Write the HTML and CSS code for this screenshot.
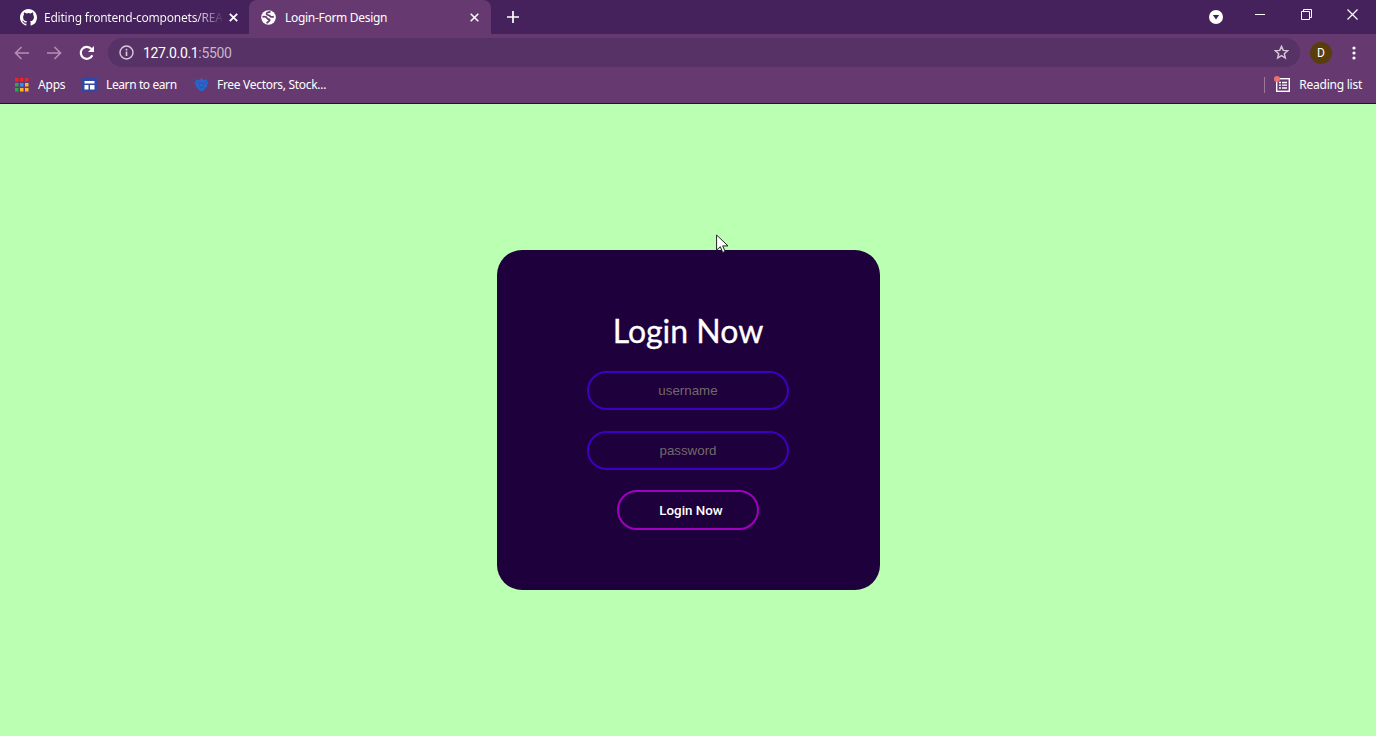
FILE: index.html
```html
<!DOCTYPE html>
<html lang="en">
<head>
<meta charset="utf-8">
<title>Login-Form Design</title>
<link rel="stylesheet" href="styles.css">
</head>
<body>
<header class="browser">
  <div class="tabs">
    <div class="tab tab-first">
      <svg class="github" width="17" height="17" viewBox="0 0 16 16"><path fill="#fff" d="M8 0C3.58 0 0 3.58 0 8c0 3.54 2.29 6.53 5.47 7.59.4.07.55-.17.55-.38 0-.19-.01-.82-.01-1.49-2.01.37-2.53-.49-2.69-.94-.09-.23-.48-.94-.82-1.13-.28-.15-.68-.52-.01-.53.63-.01 1.08.58 1.23.82.72 1.21 1.87.87 2.33.66.07-.52.28-.87.51-1.07-1.78-.2-3.64-.89-3.64-3.95 0-.87.31-1.59.82-2.15-.08-.2-.36-1.02.08-2.12 0 0 .67-.21 2.2.82a7.6 7.6 0 0 1 4 0c1.53-1.04 2.2-.82 2.2-.82.44 1.1.16 1.92.08 2.12.51.56.82 1.27.82 2.15 0 3.07-1.87 3.75-3.65 3.95.29.25.54.73.54 1.48 0 1.07-.01 1.93-.01 2.2 0 .21.15.46.55.38A8 8 0 0 0 16 8c0-4.42-3.58-8-8-8z"/></svg>
      <span class="tab-title faded">Editing frontend-componets/REA</span>
      <svg class="close" width="9" height="9" viewBox="0 0 9 9"><path d="M.8.8l7.4 7.4M8.2.8L.8 8.2" stroke="#fff" stroke-width="1.8"/></svg>
    </div>
    <div class="tab tab-active">
      <svg width="15" height="15" viewBox="0 0 15 15"><circle cx="7.5" cy="7.5" r="7.3" fill="#fff"/><path d="M9.500 1.800C7 1.800 4.800 3.200 5.800 4.600 6.500 5.500 8.400 4.800 9 6c.5 1 1.600 1.300 3.800.6M1.500 6.800c2.600-.4 4.200.200 4.600 1.400.3 1 1.700.7 2.400 1.300.7.8-.3 1.500-1.200 2.200-.6.5-.9.900-1.800 1.200" fill="none" stroke="#663a70" stroke-width="1.700"/></svg>
      <span class="tab-title">Login-Form Design</span>
      <svg class="close" width="9" height="9" viewBox="0 0 9 9"><path d="M.7.7l7.6 7.6M8.3.7L.7 8.3" stroke="#fff" stroke-width="1.5"/></svg>
    </div>
    <div class="tab-rest">
      <svg class="new-tab" width="12" height="12" viewBox="0 0 12 12"><path d="M6 0v12M0 6h12" stroke="#fff" stroke-width="1.700"/></svg>
      <div class="window-tools">
        <svg class="tab-search" width="14" height="14" viewBox="0 0 14 14"><circle cx="7" cy="7" r="7" fill="#fff"/><path d="M3.8 5h6.4L7 9.5z" fill="#40205a"/></svg>
        <svg class="minimize" width="10" height="10" viewBox="0 0 10 10"><path d="M0 5.5h10" stroke="#fff"/></svg>
        <svg class="restore" width="11" height="11" viewBox="0 0 11 11"><path d="M.5 2.5h8v8h-8zM2.5 2.5v-2h8v8h-2" fill="none" stroke="#fff"/></svg>
        <svg class="exit" width="11" height="11" viewBox="0 0 11 11"><path d="M.5.5l10 10M10.5.5l-10 10" stroke="#fff" stroke-width="1.2"/></svg>
      </div>
    </div>
  </div>
  <div class="toolbar">
    <svg class="back" width="15" height="14" viewBox="0 0 15 14"><path d="M15 7H1.5M7.5 1l-6 6 6 6" fill="none" stroke="#b68db6" stroke-width="1.6"/></svg>
    <svg class="forward" width="15" height="14" viewBox="0 0 15 14"><path d="M0 7h13.5M7.5 1l6 6-6 6" fill="none" stroke="#b68db6" stroke-width="1.6"/></svg>
    <svg class="reload" width="16" height="16" viewBox="0 0 16 16"><path d="M13.3 10.2A6 6 0 1 1 12.4 4" fill="none" stroke="#fff" stroke-width="2.2"/><path d="M15 1v6H9z" fill="#fff"/></svg>
    <div class="address">
      <svg width="15" height="15" viewBox="0 0 15 15"><circle cx="7.5" cy="7.5" r="6.5" fill="none" stroke="#dbcbdc" stroke-width="1.4"/><path d="M7.5 6.5V11M7.5 3.8v1.6" stroke="#dbcbdc" stroke-width="1.6"/></svg>
      <span class="url">127.0.0.1<span class="port">:5500</span></span>
      <svg class="star" width="15" height="15" viewBox="0 0 15 15"><path d="M7.5 1.4l1.75 4 4.35.35-3.3 2.9 1 4.3-3.8-2.3-3.8 2.3 1-4.3-3.3-2.9 4.35-.35z" fill="none" stroke="#d5c3d5" stroke-width="1.5"/></svg>
    </div>
    <div class="avatar">D</div>
    <svg class="more" width="4" height="14" viewBox="0 0 4 14"><g fill="#fff"><circle cx="2" cy="2" r="1.6"/><circle cx="2" cy="7" r="1.6"/><circle cx="2" cy="12" r="1.6"/></g></svg>
  </div>
  <nav class="bookmarks">
    <svg class="apps" width="14" height="14" viewBox="0 0 14 14"><path fill="#e22" d="M0 0h3.5v3.5H0zM5 0h3.5v3.5H5zM10 0h3.5v3.5H10z"/><path fill="#2ba84a" d="M0 5h3.5v3.5H0z"/><path fill="#348cff" d="M5 5h3.5v3.5H5z"/><path fill="#ffb624" d="M10 5h3.5v3.5H10zM5 10h3.5v3.5H5zM10 10h3.5v3.5H10z"/><path fill="#2ba84a" d="M0 10h3.5v3.5H0z"/></svg>
    <span class="apps-label">Apps</span>
    <svg class="learn" width="15" height="15" viewBox="0 0 15 15"><rect width="15" height="15" rx="1" fill="#3048a2"/><path d="M2.500 4h10v2.500h-10zM2.500 8h4v4.500h-4zM8 8h4.500v4.500H8z" fill="#fff"/></svg>
    <span class="learn-label">Learn to earn</span>
    <svg class="vectors" width="15" height="15" viewBox="0 0 15 15"><path fill="#2468cb" d="M7.500 0l1.200 2.400c1 .1 1.800.4 2.500.8l2.100-1-.4 2.600L15 6l-2.100 1.500.3 2.200-1.500.6c-.9 2.200-2.400 3.700-4.200 3.700s-3.300-1.500-4.200-3.700l-1.500-.6.300-2.200L0 6l2.100-1.200-.4-2.600 2.100 1c.7-.4 1.500-.7 2.500-.8z"/><path d="M3 6h9M5 9.700q2.500 2.500 5 0M4.500 7.800H6M9 7.800h1.500" fill="none" stroke="#563fa0"/></svg>
    <span class="vectors-label">Free Vectors, Stock...</span>
    <span class="divider"></span>
    <svg class="reading" width="17" height="17" viewBox="0 0 17 17"><rect x="2.700" y="2.700" width="12.600" height="12.600" fill="none" stroke="#fff" stroke-width="1.400"/><path d="M5 6.500h2M5 9.200h2M5 12h2M8 6.500h5M8 9.200h5M8 12h5" stroke="#fff" stroke-width="1.300"/><circle cx="3" cy="3" r="3" fill="#ef716d"/></svg>
    <span class="reading-label">Reading list</span>
  </nav>
</header>
<main class="page">
  <form class="card">
    <h1 class="heading">Login Now</h1>
    <input class="field" type="text" placeholder="username">
    <input class="field" type="password" placeholder="password">
    <button class="submit" type="button">Login Now</button>
  </form>
</main>
<svg class="cursor" width="13" height="20" viewBox="0 0 13 20"><path d="M.6 1v15.200l3.700-3.500 2.400 5.700 2.400-1-2.400-5.500H12z" fill="#fff" stroke="#222" stroke-width="1"/></svg>
</body>
</html>
```
FILE: styles.css
```css
* { box-sizing: border-box; }
body { margin: 0; height: 736px; overflow: hidden; display: flex; flex-direction: column; background: #bbffb2; font-family: "Noto Sans", sans-serif; }
svg { display: block; flex: none; }
.browser { height: 104px; flex: none; background: #663a70; border-bottom: 1px solid #28103a; color: #fff; font-size: 12px; }
.tabs { height: 34px; display: flex; background: #46225c; }
.tab { height: 34px; display: flex; align-items: center; }
.tab-first { width: 249px; padding-left: 20px; }
.tab-title { margin-left: 7px; white-space: nowrap; letter-spacing: -.22px; }
.faded { width: 178px; background: linear-gradient(to right, #fff 152px, #5a3a6c 177px); background-clip: text; color: transparent; }
.tab-first .close { margin-left: 7px; }
.tab-active { width: 242px; padding: 0 12px; background: #663a70; border-radius: 8px 8px 0 0; }
.tab-active .tab-title { margin-left: 9px; letter-spacing: -.3px; }
.tab-active .close { margin-left: auto; }
.tab-rest { flex: 1; display: flex; }
.new-tab { margin: 11px 0 0 16px; }
.window-tools { display: flex; margin-left: auto; padding-right: 18px; }
.tab-search { margin-top: 10px; }
.minimize { margin: 9px 0 0 32px; }
.restore { margin: 9px 0 0 36px; }
.exit { margin: 9px 0 0 35px; }
.toolbar { height: 37px; display: flex; align-items: center; padding-left: 14px; }
.forward { margin-left: 18px; }
.reload { margin-left: 17px; }
.address { width: 1192px; height: 29px; margin-left: 13px; padding: 0 11px; display: flex; align-items: center; border-radius: 15px; background: #573266; }
.url { margin-left: 9px; font: 14px/20px Roboto, sans-serif; letter-spacing: -.33px; }
.port { color: #c8b5cb; }
.star { margin-left: auto; }
.avatar { width: 22px; height: 22px; margin-left: 10px; border-radius: 50%; background: #593d0d; text-align: center; font: 12px/22px Roboto, sans-serif; }
.more { margin-left: 20px; }
.bookmarks { height: 28px; display: flex; align-items: center; padding: 0 14px 1px 15px; white-space: nowrap; letter-spacing: -.2px; }
.apps-label { width: 28px; margin-left: 9px; }
.learn { margin-left: 16px; }
.learn-label { width: 72px; margin-left: 9px; letter-spacing: -.4px; }
.vectors { margin: 0 8px 0 16px; }
.vectors-label { letter-spacing: -.3px; }
.divider { width: 1px; height: 16px; margin-left: auto; background: #9b799f; }
.reading { margin: 0 8px 0 9px; }
.reading-label { letter-spacing: -.25px; }
.page { flex: 1; display: flex; justify-content: center; align-items: flex-start; padding-top: 146px; }
.card { width: 383px; height: 340px; border-radius: 25px; background: #1e003c; display: flex; flex-direction: column; align-items: center; padding-top: 60px; }
.heading { margin: 0 0 20px; height: 41px; color: #fff; font: 400 32px/41px Lato, sans-serif; -webkit-text-stroke: .3px #fff; white-space: nowrap; }
.field { width: 202px; height: 39px; margin: 0 0 20px; padding: 0; border: 2px solid #3d00c0; border-radius: 20px; background: transparent; text-align: center; color: #fff; font: 13.33px "Liberation Sans", sans-serif; outline: none; }
.field[type="text"] { margin-bottom: 21px; }
.field::placeholder { color: #716a69; }
.submit { width: 142px; height: 40px; padding: 0 0 0 6px; border: 2px solid #a000c0; border-radius: 20px; background: transparent; color: #fff; font: 500 13.33px Roboto, sans-serif; }
.cursor { position: absolute; left: 716px; top: 234px; }
```
